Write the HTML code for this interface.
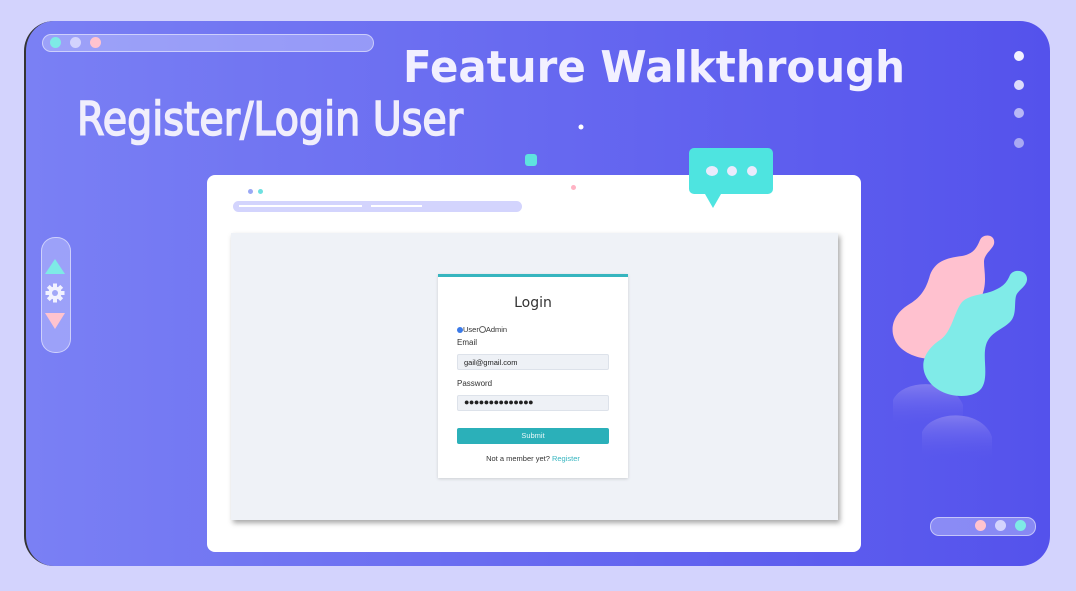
<!DOCTYPE html>
<html><head><style>
body{margin:0;width:1076px;height:591px;background:#d3d3fd;position:relative;overflow:hidden;font-family:"Liberation Sans",sans-serif}
.card{position:absolute;left:24px;top:21px;width:1026px;height:545px;border-radius:30px;background:linear-gradient(90deg,#7a80f4,#5452ec);border-left:2px solid #333;box-sizing:border-box}
.abs{position:absolute}
.pill{position:absolute;background:rgba(200,205,255,.45);border:1px solid rgba(255,255,255,.5);border-radius:12px}
.dot{position:absolute;border-radius:50%}
.panel{position:absolute;left:207px;top:175px;width:654px;height:377px;background:#fff;border-radius:8px}
.gray{position:absolute;left:231px;top:233px;width:607px;height:287px;background:#eff2f7;box-shadow:2px 3px 5px rgba(0,0,0,.35)}
.login{position:absolute;left:438px;top:274px;width:190px;height:204px;background:#fff;border-top:3px solid #37b5bf;box-sizing:border-box;box-shadow:0 1px 3px rgba(0,0,0,.15);font-size:8px;color:#333}
.inp{position:absolute;left:19px;width:152px;height:16px;background:#eef1f6;border:1px solid #dde2ea;border-radius:2px;box-sizing:border-box;font-size:7.5px;padding:3px 6px;color:#222}
</style></head><body>
<div class="card"></div>
<div class="pill" style="left:42px;top:34px;width:330px;height:16px"></div>
<div class="dot" style="left:50px;top:37px;width:11px;height:11px;background:#7eeae6"></div>
<div class="dot" style="left:70px;top:37px;width:11px;height:11px;background:#d3d3fd"></div>
<div class="dot" style="left:90px;top:37px;width:11px;height:11px;background:#ffc3cf"></div>
<svg class="abs" style="left:0;top:0" width="1076" height="160">
<text x="403" y="82" font-family="DejaVu Sans" font-weight="bold" font-size="44" fill="#f2f0ff" textLength="502" lengthAdjust="spacingAndGlyphs">Feature Walkthrough</text>
<text x="77" y="135" font-family="DejaVu Sans" font-size="46" fill="#f0eefc" stroke="#f0eefc" stroke-width="1.6" textLength="386" lengthAdjust="spacingAndGlyphs">Register/Login User</text>
<circle cx="581" cy="127" r="2.5" fill="#fff"/>
<circle cx="1019" cy="56" r="5" fill="#f2f2ff"/><circle cx="1019" cy="85" r="5" fill="#dcdcfb"/><circle cx="1019" cy="113" r="5" fill="#b8b8f6"/><circle cx="1019" cy="143" r="5" fill="#a9a9f3"/>
</svg>
<div class="panel"></div>
<div class="abs" style="left:525px;top:154px;width:12px;height:12px;border-radius:3px;background:#5ee3df"></div>
<div class="dot" style="left:571px;top:185px;width:5px;height:5px;background:#ffb3c4"></div>
<div class="dot" style="left:248px;top:189px;width:5px;height:5px;background:#9aa8f5"></div>
<div class="dot" style="left:258px;top:189px;width:5px;height:5px;background:#6ee0e0"></div>
<div class="abs" style="left:233px;top:201px;width:289px;height:11px;border-radius:6px;background:#d3d4fd"></div>
<div class="abs" style="left:239px;top:205px;width:123px;height:2px;background:#fff"></div>
<div class="abs" style="left:371px;top:205px;width:51px;height:2px;background:#fff"></div>
<svg class="abs" style="left:688px;top:147px" width="88" height="64"><path d="M6 1h74a5 5 0 0 1 5 5v36a5 5 0 0 1-5 5H33l-8 14-8-14H6a5 5 0 0 1-5-5V6a5 5 0 0 1 5-5z" fill="#4ee4e0"/><ellipse cx="24" cy="24" rx="6" ry="5" fill="#eaeafc"/><ellipse cx="44" cy="24" rx="5" ry="5" fill="#eaeafc"/><ellipse cx="64" cy="24" rx="5" ry="5" fill="#eaeafc"/></svg>
<div class="gray"></div>
<div class="login">
<div style="text-align:center;font-size:14px;margin-top:18px;color:#333;font-family:'DejaVu Sans',sans-serif">Login</div>
<div class="abs" style="left:19px;top:48px;font-size:7.5px;color:#333"><span style="display:inline-block;width:6px;height:6px;border-radius:50%;background:#3b7ae8;vertical-align:-1px"></span>User<span style="display:inline-block;width:5px;height:5px;border-radius:50%;border:1px solid #666;vertical-align:-1px"></span>Admin</div>
<div class="abs" style="left:19px;top:61px">Email</div>
<div class="inp" style="top:77px">gail@gmail.com</div>
<div class="abs" style="left:19px;top:102px">Password</div>
<div class="inp" style="top:118px;font-size:9px;padding-top:1px;letter-spacing:-.5px">●●●●●●●●●●●●●●</div>
<div class="abs" style="left:19px;top:151px;width:152px;height:16px;background:#2bb0b9;border-radius:2px;color:#e6f7f8;text-align:center;font-size:7.5px;line-height:16px">Submit</div>
<div class="abs" style="left:0;width:190px;top:177px;text-align:center;font-size:7.5px">Not a member yet? <span style="color:#36b6c0">Register</span></div>
</div>
<div class="pill" style="left:41px;top:237px;width:28px;height:114px;border-radius:14px"></div>
<svg class="abs" style="left:44px;top:255px" width="24" height="80"><path d="M1 19L11 4l10 15z" fill="#7eeae6"/><g transform="translate(11,38)" fill="#f2f2ff"><circle r="6.5"/><g><rect x="-2" y="-9.5" width="4" height="19"/><rect x="-2" y="-9.5" width="4" height="19" transform="rotate(45)"/><rect x="-2" y="-9.5" width="4" height="19" transform="rotate(90)"/><rect x="-2" y="-9.5" width="4" height="19" transform="rotate(135)"/></g><circle r="3" fill="#a2a8f8"/></g><path d="M1 58h20L11 74z" fill="#ffc3cf"/></svg>
<svg class="abs" style="left:880px;top:200px" width="160" height="270">
<defs><linearGradient id="r" x1="0" y1="0" x2="0" y2="1"><stop offset="0" stop-color="#8a84f0" stop-opacity=".8"/><stop offset="1" stop-color="#5452ec" stop-opacity="0"/></linearGradient></defs>
<path d="M13 200c10-22 60-22 70 5v25H13z" fill="url(#r)"/>
<path d="M42 232c10-22 60-24 70 5v25H42z" fill="url(#r)"/>
<path d="M100,40 C103,33 116,34 114,44 C112,50 104,54 104,62 C104,72 108,85 100,100 C95,115 95,140 75,155 C60,163 30,160 18,145 C8,132 12,115 28,105 C40,98 46,90 50,75 C55,62 65,58 82,56 C92,54 96,50 100,40 Z" fill="#ffc1cf"/>
<path d="M130,75 C134,68 148,70 147,80 C146,87 138,90 136,96 C134,104 137,115 130,122 C122,130 110,132 106,145 C102,158 110,180 100,190 C90,200 60,198 48,180 C38,165 45,150 60,140 C72,132 74,112 82,102 C90,94 105,95 115,90 C124,86 127,82 130,75 Z" fill="#80ebe8"/>
</svg>
<div class="pill" style="left:930px;top:517px;width:104px;height:17px;border-radius:9px"></div>
<div class="dot" style="left:975px;top:520px;width:11px;height:11px;background:#ffc3cf"></div>
<div class="dot" style="left:995px;top:520px;width:11px;height:11px;background:#d3d3fd"></div>
<div class="dot" style="left:1015px;top:520px;width:11px;height:11px;background:#7eeae6"></div>
</body></html>
